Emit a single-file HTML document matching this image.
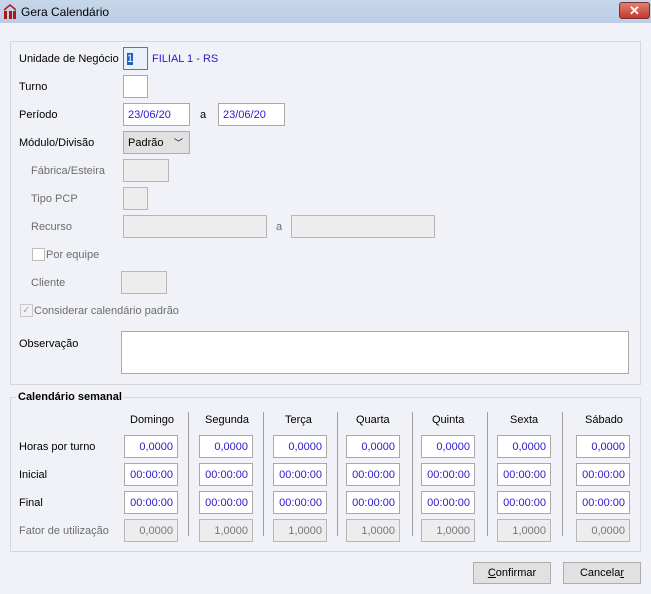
<!DOCTYPE html>
<html><head><meta charset="utf-8"><style>
*{box-sizing:border-box;margin:0;padding:0}
body{width:651px;height:594px;background:#f0f2f8;font-family:"Liberation Sans",sans-serif;font-size:11px;color:#000;position:relative;overflow:hidden}
.a{position:absolute}
.t{position:absolute;white-space:nowrap;line-height:14px;margin-top:1px}
.g{color:#6d6d6d}
.in{position:absolute;height:23px;background:#fff;border:1px solid #a9a9a9;color:#2a1ac8;line-height:22px;padding:0 4px;white-space:nowrap}
.dis{background:#ededed;border-color:#b7b7b7;color:#777}
.r{text-align:right}
.sep{position:absolute;width:1px;background:#a0a0a0;top:412px;height:124px}
.btn{position:absolute;height:22px;border:1px solid #adadad;background:#e1e1e1;text-align:center;line-height:20px}
</style></head><body>
<div class="a" style="left:0;top:0;width:651px;height:23px;background:linear-gradient(#c6d6ea,#bccee6)"></div>
<svg class="a" style="left:3px;top:4px" width="14" height="15" viewBox="0 0 14 15"><path d="M1 5 L7 0 L13 5 V7 L7 2 L1 7Z" fill="#b01818"/><rect x="1" y="7" width="3" height="8" fill="#b01818"/><rect x="6" y="7" width="3" height="8" fill="#b01818"/><rect x="10" y="7" width="3" height="8" fill="#b01818"/></svg>
<div class="t" style="left:21px;top:4px;font-size:12px">Gera Calendário</div>
<div class="a" style="left:619px;top:2px;width:31px;height:17px;border:1px solid #7a3030;border-radius:3px;background:linear-gradient(#e08070,#c23a2c);color:#fff;text-align:center;font-weight:bold;line-height:15px;font-size:13px">✕</div>

<div class="a" style="left:10px;top:41px;width:631px;height:344px;border:1px solid #d6d8dc"></div>
<div class="t" style="left:19px;top:51px">Unidade de Negócio</div>
<div class="in" style="left:123px;top:47px;width:25px;background:#e8f0fc;border-color:#3c7fd0;color:#fff;padding:0 3px"><span style="background:#2060c0;color:#fff">1</span></div>
<div class="t" style="left:152px;top:51px;color:#2a1ac8">FILIAL 1 - RS</div>
<div class="t" style="left:19px;top:79px">Turno</div>
<div class="in" style="left:123px;top:75px;width:25px"></div>
<div class="t" style="left:19px;top:107px">Período</div>
<div class="in" style="left:123px;top:103px;width:67px">23/06/20</div>
<div class="t" style="left:200px;top:107px">a</div>
<div class="in" style="left:218px;top:103px;width:67px">23/06/20</div>
<div class="t" style="left:19px;top:135px">Módulo/Divisão</div>
<div class="in" style="left:123px;top:131px;width:67px;background:#e1e1e1;border-color:#adadad;color:#000">Padrão<span style="position:absolute;right:6px;top:0;font-size:9px">﹀</span></div>
<div class="t g" style="left:31px;top:163px">Fábrica/Esteira</div>
<div class="in dis" style="left:123px;top:159px;width:46px"></div>
<div class="t g" style="left:31px;top:191px">Tipo PCP</div>
<div class="in dis" style="left:123px;top:187px;width:25px"></div>
<div class="t g" style="left:31px;top:219px">Recurso</div>
<div class="in dis" style="left:123px;top:215px;width:144px"></div>
<div class="t g" style="left:276px;top:219px">a</div>
<div class="in dis" style="left:291px;top:215px;width:144px"></div>
<div class="a" style="left:32px;top:248px;width:13px;height:13px;border:1px solid #bcbcbc;background:#fff"></div>
<div class="t g" style="left:46px;top:247px">Por equipe</div>
<div class="t g" style="left:31px;top:275px">Cliente</div>
<div class="in dis" style="left:121px;top:271px;width:46px"></div>
<div class="a" style="left:20px;top:304px;width:13px;height:13px;border:1px solid #c8c8c8;color:#aaa;font-size:10px;line-height:11px;text-align:center">✓</div>
<div class="t g" style="left:34px;top:303px">Considerar calendário padrão</div>
<div class="t" style="left:19px;top:336px">Observação</div>
<div class="in" style="left:121px;top:331px;width:508px;height:43px"></div>

<div class="a" style="left:10px;top:397px;width:631px;height:155px;border:1px solid #d6d8dc"></div>
<div class="t" style="left:16px;top:389px;font-weight:bold;background:#f0f2f8;padding:0 2px">Calendário semanal</div>
<div class="t" style="left:19px;top:439px">Horas por turno</div>
<div class="t" style="left:19px;top:467px">Inicial</div>
<div class="t" style="left:19px;top:495px">Final</div>
<div class="t g" style="left:19px;top:523px">Fator de utilização</div>
<div class="sep" style="left:188px"></div><div class="sep" style="left:263px"></div><div class="sep" style="left:337px"></div><div class="sep" style="left:412px"></div><div class="sep" style="left:487px"></div><div class="sep" style="left:562px"></div>

<div class="t" style="left:130px;top:412px">Domingo</div>
<div class="t" style="left:205px;top:412px">Segunda</div>
<div class="t" style="left:285px;top:412px">Terça</div>
<div class="t" style="left:356px;top:412px">Quarta</div>
<div class="t" style="left:432px;top:412px">Quinta</div>
<div class="t" style="left:510px;top:412px">Sexta</div>
<div class="t" style="left:585px;top:412px">Sábado</div>

<div class="in r" style="left:124px;top:435px;width:54px">0,0000</div>
<div class="in r" style="left:199px;top:435px;width:54px">0,0000</div>
<div class="in r" style="left:273px;top:435px;width:54px">0,0000</div>
<div class="in r" style="left:346px;top:435px;width:54px">0,0000</div>
<div class="in r" style="left:421px;top:435px;width:54px">0,0000</div>
<div class="in r" style="left:497px;top:435px;width:54px">0,0000</div>
<div class="in r" style="left:576px;top:435px;width:54px">0,0000</div>

<div class="in r" style="left:124px;top:463px;width:54px">00:00:00</div>
<div class="in r" style="left:199px;top:463px;width:54px">00:00:00</div>
<div class="in r" style="left:273px;top:463px;width:54px">00:00:00</div>
<div class="in r" style="left:346px;top:463px;width:54px">00:00:00</div>
<div class="in r" style="left:421px;top:463px;width:54px">00:00:00</div>
<div class="in r" style="left:497px;top:463px;width:54px">00:00:00</div>
<div class="in r" style="left:576px;top:463px;width:54px">00:00:00</div>

<div class="in r" style="left:124px;top:491px;width:54px">00:00:00</div>
<div class="in r" style="left:199px;top:491px;width:54px">00:00:00</div>
<div class="in r" style="left:273px;top:491px;width:54px">00:00:00</div>
<div class="in r" style="left:346px;top:491px;width:54px">00:00:00</div>
<div class="in r" style="left:421px;top:491px;width:54px">00:00:00</div>
<div class="in r" style="left:497px;top:491px;width:54px">00:00:00</div>
<div class="in r" style="left:576px;top:491px;width:54px">00:00:00</div>

<div class="in r dis" style="left:124px;top:519px;width:54px">0,0000</div>
<div class="in r dis" style="left:199px;top:519px;width:54px">1,0000</div>
<div class="in r dis" style="left:273px;top:519px;width:54px">1,0000</div>
<div class="in r dis" style="left:346px;top:519px;width:54px">1,0000</div>
<div class="in r dis" style="left:421px;top:519px;width:54px">1,0000</div>
<div class="in r dis" style="left:497px;top:519px;width:54px">1,0000</div>
<div class="in r dis" style="left:576px;top:519px;width:54px">0,0000</div>

<div class="btn" style="left:473px;top:562px;width:78px"><u>C</u>onfirmar</div>
<div class="btn" style="left:563px;top:562px;width:78px">Cancela<u>r</u></div>
</body></html>
